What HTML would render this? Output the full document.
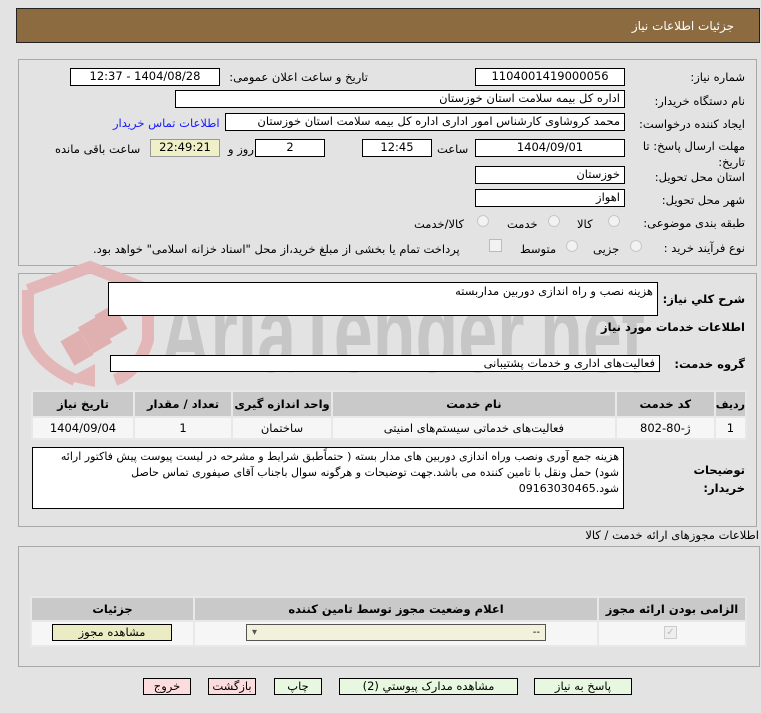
<!DOCTYPE html>
<html><head><meta charset="utf-8"><style>
*{box-sizing:border-box;margin:0;padding:0}
body{width:761px;height:713px;background:#e3e3e3;font-family:"DejaVu Sans","Liberation Sans",sans-serif;font-size:11.5px;color:#000;position:relative;overflow:hidden;direction:rtl}
.a{position:absolute;white-space:nowrap}
.box{position:absolute;background:#fff;border:1px solid #000;padding:0 4px;line-height:15px;text-align:right}
.c{text-align:center}
.pan{position:absolute;border:1px solid #a8a8a8}
.lbl{position:absolute;white-space:nowrap;text-align:right}
.b{font-weight:bold}
table{border-collapse:collapse;position:absolute;direction:rtl}
td{border:2px solid #e8e8e8;text-align:center;font-size:11.5px}
.btn{position:absolute;border:1px solid #000;text-align:center;line-height:15px;height:17px}
.radio{position:absolute;width:12px;height:12px;border-radius:50%;border:1px solid #c8c8c8;background:#f2f2f2}
</style></head><body>
<div class="a" style="left:16px;top:8px;width:744px;height:35px;background:#8c6b40;border:1px solid #222"></div>
<div class="a" style="right:27px;top:19px;color:#fff;font-size:12px">جزئیات اطلاعات نیاز</div>

<div class="pan" style="left:18px;top:59px;width:739px;height:207px"></div>
<div class="pan" style="left:18px;top:273px;width:739px;height:254px"></div>

<svg class="a" style="left:0;top:0" width="761" height="713">
<g transform="translate(20 262)"><g fill="none" stroke="#e3b7b7" stroke-width="12"><path d="M8 28 L70 5 L128 28 L128 78 Q118 110 95 118"/><path d="M8 28 L8 70 Q15 100 55 118"/></g><path d="M45 118 L75 102 L75 125 Z" fill="#e3b7b7"/><g fill="#e0b0b0"><rect x="46" y="72" width="22" height="28" transform="rotate(-30 57 86)"/><rect x="64" y="58" width="22" height="30" transform="rotate(-30 75 73)"/><rect x="80" y="46" width="22" height="28" transform="rotate(-30 91 60)"/></g></g>
<text x="160" y="372" font-family="Liberation Sans Narrow, Liberation Sans, sans-serif" font-weight="bold" font-size="112" fill="#c6c6c6" textLength="485" lengthAdjust="spacingAndGlyphs" style="direction:ltr">AriaTender.net</text>
</svg>

<div class="lbl" style="right:16px;top:70px">شماره نیاز:</div>
<div class="box c" style="left:475px;top:68px;width:150px;height:18px">1104001419000056</div>
<div class="lbl" style="right:393px;top:70px">تاریخ و ساعت اعلان عمومی:</div>
<div class="box c" style="left:70px;top:68px;width:150px;height:18px">1404/08/28 - 12:37</div>
<div class="lbl" style="right:16px;top:94px">نام دستگاه خریدار:</div>
<div class="box" style="left:175px;top:90px;width:450px;height:18px">اداره کل بیمه سلامت استان خوزستان</div>
<div class="lbl" style="right:16px;top:117px">ایجاد کننده درخواست:</div>
<div class="box" style="left:225px;top:113px;width:400px;height:18px">محمد کروشاوی کارشناس امور اداری اداره کل بیمه سلامت استان خوزستان</div>
<div class="lbl" style="left:113px;top:116px;color:#1a1aff">اطلاعات تماس خریدار</div>
<div class="lbl" style="right:16px;top:139px">مهلت ارسال پاسخ: تا</div>
<div class="lbl" style="right:16px;top:155px">تاریخ:</div>
<div class="box c" style="left:475px;top:139px;width:150px;height:18px">1404/09/01</div>
<div class="lbl" style="left:437px;top:142px">ساعت</div>
<div class="box c" style="left:362px;top:139px;width:70px;height:18px">12:45</div>
<div class="box c" style="left:255px;top:139px;width:70px;height:18px">2</div>
<div class="lbl" style="left:228px;top:142px">روز و</div>
<div class="box c" style="left:150px;top:139px;width:70px;height:18px;background:#efefc8;border-color:#999">22:49:21</div>
<div class="lbl" style="left:55px;top:142px">ساعت باقی مانده</div>
<div class="lbl" style="right:16px;top:170px">استان محل تحویل:</div>
<div class="box" style="left:475px;top:166px;width:150px;height:18px">خوزستان</div>
<div class="lbl" style="right:16px;top:193px">شهر محل تحویل:</div>
<div class="box" style="left:475px;top:189px;width:150px;height:18px">اهواز</div>
<div class="lbl" style="right:16px;top:216px">طبقه بندی موضوعی:</div>
<div class="radio" style="left:608px;top:215px"></div><div class="lbl" style="left:577px;top:217px">کالا</div>
<div class="radio" style="left:548px;top:215px"></div><div class="lbl" style="left:507px;top:217px">خدمت</div>
<div class="radio" style="left:477px;top:215px"></div><div class="lbl" style="left:414px;top:217px">کالا/خدمت</div>
<div class="lbl" style="right:16px;top:241px">نوع فرآیند خرید :</div>
<div class="radio" style="left:630px;top:240px"></div><div class="lbl" style="left:593px;top:242px">جزیی</div>
<div class="radio" style="left:566px;top:240px"></div><div class="lbl" style="left:520px;top:242px">متوسط</div>
<div class="a" style="left:489px;top:239px;width:13px;height:13px;border:1px solid #bbb;background:#f2f2f2"></div>
<div class="lbl" style="left:93px;top:242px">پرداخت تمام یا بخشی از مبلغ خرید،از محل "اسناد خزانه اسلامی" خواهد بود.</div>

<div class="lbl b" style="right:16px;top:292px">شرح کلي نیاز:</div>
<div class="box" style="left:108px;top:282px;width:550px;height:34px;line-height:16px">هزینه نصب و راه اندازی دوربین مداربسته</div>
<div class="lbl b" style="right:16px;top:320px">اطلاعات خدمات مورد نیاز</div>
<div class="lbl b" style="right:16px;top:357px">گروه خدمت:</div>
<div class="box" style="left:110px;top:355px;width:550px;height:17px">فعالیت‌های اداری و خدمات پشتیبانی</div>
<table style="left:31px;top:390px;width:716px;height:50px">
<tr style="background:#c9c9c9;font-weight:bold;height:26px"><td style="width:31px;font-size:11px" class="b">ردیف</td><td style="width:99px" class="b">کد خدمت</td><td class="b">نام خدمت</td><td style="width:100px" class="b">واحد اندازه گیری</td><td style="width:98px" class="b">تعداد / مقدار</td><td style="width:102px" class="b">تاریخ نیاز</td></tr>
<tr style="background:#f6f6f6;height:22px"><td>1</td><td>ژ-80-802</td><td>فعالیت‌های خدماتی سیستم‌های امنیتی</td><td>ساختمان</td><td>1</td><td>1404/09/04</td></tr>
</table>
<div class="lbl b" style="right:16px;top:463px">توضیحات</div>
<div class="lbl b" style="right:16px;top:481px">خریدار:</div>
<div class="box" style="left:32px;top:447px;width:592px;height:62px;white-space:normal;line-height:16px;padding-top:1px;font-size:11px">هزینه جمع آوری  ونصب وراه اندازی  دوربین های  مدار بسته ( حتماًطبق شرایط و مشرحه در لیست پیوست پیش فاکتور ارائه شود) حمل ونقل با تامین کننده می باشد.جهت توضیحات و هرگونه سوال باجناب آقای صیفوری تماس حاصل شود.09163030465</div>

<div class="lbl" style="right:2px;top:528px">اطلاعات مجوزهای ارائه خدمت / کالا</div>
<div class="pan" style="left:18px;top:546px;width:742px;height:121px"></div>
<table style="left:30px;top:596px;width:717px;height:50px">
<tr style="background:#c9c9c9;height:24px"><td style="width:148px" class="b">الزامی بودن ارائه مجوز</td><td class="b">اعلام وضعیت مجوز توسط تامین کننده</td><td style="width:163px" class="b">جزئیات</td></tr>
<tr style="background:#f6f6f6;height:25px"><td></td><td></td><td></td></tr>
</table>
<div class="a" style="left:664px;top:626px;width:13px;height:13px;border:1px solid #ccc;background:#eee;color:#bbb;font-size:10px;line-height:12px;text-align:center">✓</div>
<div class="a" style="left:246px;top:624px;width:300px;height:17px;border:1px solid #555;background:#f2f2dc;font-size:10px;line-height:15px;padding:0 5px;direction:ltr"><span style="color:#555">▾</span><span style="float:right">--</span></div>
<div class="btn" style="left:52px;top:624px;width:120px;background:#ececc4">مشاهده مجوز</div>

<div class="btn" style="left:534px;top:678px;width:98px;background:#e8f8e0">پاسخ به نیاز</div>
<div class="btn" style="left:339px;top:678px;width:179px;background:#e8f8e0">مشاهده مدارک پیوستي (2)</div>
<div class="btn" style="left:274px;top:678px;width:48px;background:#e8f8e0">چاپ</div>
<div class="btn" style="left:208px;top:678px;width:48px;background:#fcdcdc">بازگشت</div>
<div class="btn" style="left:143px;top:678px;width:48px;background:#fcdcdc">خروج</div>
</body></html>
